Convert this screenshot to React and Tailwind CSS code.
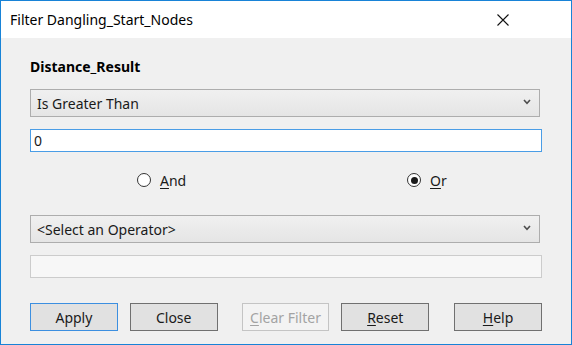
import React from 'react';

const font = { fontFamily: '"Segoe UI", "Noto Sans", sans-serif' };

function Chevron() {
  return (
    <svg width="8" height="6" viewBox="0 0 8 6" className="shrink-0 mb-[3px]">
      <polyline points="1,1 4,4.3 7,1" fill="none" stroke="#4d4d4d" strokeWidth="1.6" />
    </svg>
  );
}

function Select({ value }) {
  return (
    <div className="w-[510px] h-[28px] border border-[#adadad] bg-gradient-to-b from-[#f0f0f0] to-[#e5e5e5] flex items-center justify-between pl-[6px] pr-[8px] text-[14px] text-[#1a1a1a]">
      <span>{value}</span>
      <Chevron />
    </div>
  );
}

function Radio({ checked, label, keyChar }) {
  return (
    <label className="flex items-center gap-[9px] text-[14px] text-[#1a1a1a]">
      <span className="w-[14px] h-[14px] rounded-full border border-[#333333] bg-white flex items-center justify-center">
        {checked && <span className="w-[7px] h-[7px] rounded-full bg-[#1a1a1a]" />}
      </span>
      <span>
        <span className="underline underline-offset-2">{keyChar}</span>
        {label}
      </span>
    </label>
  );
}

function Button({ children, className = '' }) {
  return (
    <button className={`w-[88px] h-[28px] border bg-[#e1e1e1] text-[14px] text-[#1a1a1a] flex items-center justify-center ${className}`}>
      {children}
    </button>
  );
}

export default function App() {
  return (
    <div style={font} className="w-[572px] h-[345px] border border-[#1883d7] bg-[#f0f0f0] flex flex-col">
      {/* Title bar */}
      <div className="h-[37px] bg-white flex items-center justify-between pl-[9px] pr-[62px]">
        <span className="text-[14px] text-black">Filter Dangling_Start_Nodes</span>
        <svg width="12" height="12" viewBox="0 0 12 12">
          <path d="M0.5 0.5 L11.5 11.5 M11.5 0.5 L0.5 11.5" stroke="#111" strokeWidth="1.1" />
        </svg>
      </div>

      {/* Body */}
      <div className="flex flex-col px-[29px]">
        <div className="mt-[20px] h-[18px] leading-[18px] text-[14px] font-bold text-black">Distance_Result</div>

        <div className="mt-[13px]">
          <Select value="Is Greater Than" />
        </div>

        <div className="mt-[12px] w-[512px] h-[23px] border border-[#4a9de6] bg-white flex items-center pl-[3px] text-[14px] text-[#1a1a1a]">
          0
        </div>

        <div className="mt-[16px] h-[24px] flex items-center pl-[107px]">
          <div className="w-[270px]">
            <Radio label="nd" keyChar="A" />
          </div>
          <Radio label="r" keyChar="O" checked />
        </div>

        <div className="mt-[23px]">
          <Select value="<Select an Operator>" />
        </div>

        <div className="mt-[12px] w-[512px] h-[23px] border border-[#cccccc] bg-[#f7f7f7]" />

        <div className="mt-[25px] flex">
          <Button className="border-[#3c8fe0]">Apply</Button>
          <Button className="ml-[12px] border-[#707070]">Close</Button>
          <Button className="ml-[24px] border-[#c4c4c4] !bg-[#f3f3f3] !text-[#a3a3a3]">
            <span><span className="underline underline-offset-2">C</span>lear Filter</span>
          </Button>
          <Button className="ml-[12px] border-[#707070]">
            <span><span className="underline underline-offset-2">R</span>eset</span>
          </Button>
          <Button className="ml-[25px] border-[#707070]">
            <span><span className="underline underline-offset-2">H</span>elp</span>
          </Button>
        </div>
      </div>
    </div>
  );
}
